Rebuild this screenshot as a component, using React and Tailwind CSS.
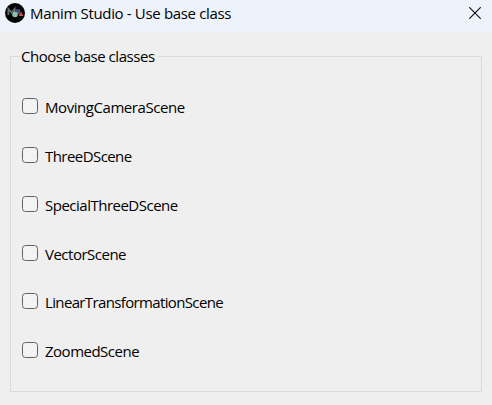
import React from "react";

const baseClasses = [
  { name: "MovingCameraScene", row: "h-[49px]", text: "tracking-[-0.44px]" },
  { name: "ThreeDScene", row: "h-[49px]", text: "tracking-[-0.56px]" },
  { name: "SpecialThreeDScene", row: "h-[49px]", text: "tracking-[-0.5px]" },
  { name: "VectorScene", row: "h-[48px]", text: "tracking-[-0.5px]" },
  { name: "LinearTransformationScene", row: "h-[49px]", text: "tracking-[-0.64px]" },
  { name: "ZoomedScene", row: "h-[49px]", text: "tracking-[-0.5px]" },
];

function AppLogo() {
  return (
    <svg className="size-5 shrink-0" viewBox="0 0 20 20">
      <circle cx="10" cy="10" r="10" fill="#020304" />
      <path d="M3.4 12V6l3.1 3.6L9.6 6v6" fill="none" stroke="#686b6e" strokeWidth="1.9" />
      <rect x="10.5" y="6.3" width="4.8" height="4.8" fill="#4b4b78" />
      <path d="M16 8.8l2.3 4.2h-4.6z" fill="#d45143" />
      <circle cx="10" cy="11.5" r="2.8" fill="#86c5a6" />
    </svg>
  );
}

export default function App() {
  return (
    <div className="flex h-[405px] w-[492px] flex-col overflow-hidden bg-[#efefef] font-['Open_Sans','Noto_Sans',sans-serif] text-[15px] text-black">
      <header className="flex h-8 shrink-0 items-start justify-between bg-[#eef3fb] pt-[3px] pr-[11px] pl-[5px]">
        <div className="flex gap-[5px]">
          <AppLogo />
          <h1 className="leading-[21px] tracking-[-0.34px] whitespace-nowrap">Manim Studio - Use base class</h1>
        </div>
        <button type="button" aria-label="Close" className="mt-1 size-3">
          <svg className="size-3" viewBox="0 0 12 12" fill="none" stroke="#111" strokeWidth="1.2">
            <path d="M.3.3l11.4 11.4M11.7.3L.3 11.7" />
          </svg>
        </button>
      </header>
      <main className="px-[10px] pt-[15px]">
        <fieldset className="h-[345px] border border-[#dadada] pl-[11px]">
          <legend className="-ml-[2px] h-[19px] pr-[3px] pl-[1px] leading-[18px] tracking-[-0.46px] whitespace-nowrap">Choose base classes</legend>
          <div className="pt-[32px]">
            {baseClasses.map(({ name, row, text }) => (
              <label key={name} className={`flex items-start gap-[7px] ${row}`}>
                <input type="checkbox" className="size-4 shrink-0 appearance-none rounded-[3.5px] border border-[#626262] bg-[#f3f3f3]" />
                <span className={`leading-[18px] whitespace-nowrap ${text}`}>{name}</span>
              </label>
            ))}
          </div>
        </fieldset>
      </main>
    </div>
  );
}
